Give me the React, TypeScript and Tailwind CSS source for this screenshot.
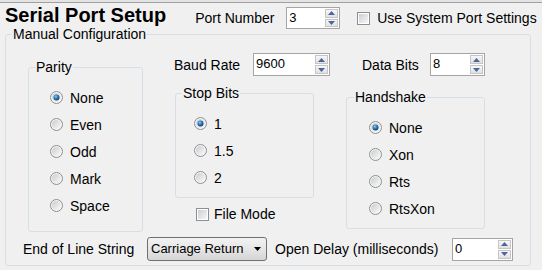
import React from 'react'

function RadioDot({ checked }: { checked?: boolean }) {
  return (
    <svg width="13" height="13" viewBox="0 0 13 13" className="shrink-0">
      <defs>
        <linearGradient id="rb-bg" x1="0" y1="0" x2="1" y2="1">
          <stop offset="0" stopColor="#c9cbcf" />
          <stop offset="1" stopColor="#fbfbfb" />
        </linearGradient>
        <radialGradient id="rb-dot" cx="0.4" cy="0.35" r="0.7">
          <stop offset="0" stopColor="#8fcdf3" />
          <stop offset="0.5" stopColor="#2676b8" />
          <stop offset="1" stopColor="#0b3a6e" />
        </radialGradient>
      </defs>
      <circle cx="6.5" cy="6.5" r="6" fill="#f4f4f4" stroke="#8d8f91" />
      <circle cx="6.5" cy="6.5" r="4.5" fill="url(#rb-bg)" />
      {checked && <circle cx="6.5" cy="6.5" r="3" fill="url(#rb-dot)" />}
    </svg>
  )
}

function CheckBox() {
  return (
    <span className="flex h-[13px] w-[13px] shrink-0 items-center justify-center border border-[#8e8f8f] bg-white">
      <span className="h-[9px] w-[9px] bg-gradient-to-br from-[#cbcfd5] to-[#f6f6f6]" />
    </span>
  )
}

function Radio({ label, checked }: { label: string; checked?: boolean }) {
  return (
    <div className="flex h-[27px] items-center">
      <RadioDot checked={checked} />
      <span className="ml-[7px]">{label}</span>
    </div>
  )
}

function SpinArrow({ up }: { up?: boolean }) {
  return (
    <span className="flex flex-1 items-center justify-center border border-[#c5c5c5] bg-gradient-to-b from-[#f7f7f7] to-[#e1e1e1]">
      <svg width="7" height="4" viewBox="0 0 7 4">
        <path d={up ? 'M0 4 L3.5 0 L7 4 Z' : 'M0 0 L3.5 4 L7 0 Z'} fill="#4c64a0" />
      </svg>
    </span>
  )
}

function Spin({ value, className }: { value: string; className: string }) {
  return (
    <div className={`flex items-stretch border border-[#a5a5a5] bg-white ${className}`}>
      <span className="flex-1 pl-[2px] text-[13px] leading-[19px]">{value}</span>
      <span className="flex w-[15px] flex-col gap-[1px] p-[1px]">
        <SpinArrow up />
        <SpinArrow />
      </span>
    </div>
  )
}

export default function App() {
  return (
    <div className="h-[270px] w-[542px] overflow-hidden bg-[#f0f0f0] font-['Liberation_Sans',Arial,sans-serif] text-[14px] leading-[16px] text-black">
      <div className="h-[2px] bg-[#e3e3e3]" />
      <div className="h-[1px] bg-[#a0a0a0]" />

      <div className="flex h-[23px] items-start">
        <h1 className="ml-[5px] mt-[1px] text-[20px] font-bold leading-[23px]">Serial Port Setup</h1>
        <div className="mt-[4px] flex items-center">
          <span className="ml-[29px] w-[91px]">Port Number</span>
          <Spin value="3" className="h-[22px] w-[54px]" />
          <span className="ml-[17px]">
            <CheckBox />
          </span>
          <span className="ml-[7px]">Use System Port Settings</span>
        </div>
      </div>

      <fieldset className="ml-[5px] h-[240px] w-[526px] rounded-[3px] border border-[#d5dfe5]">
        <legend className="ml-[6px] px-[1px]">Manual Configuration</legend>

        <div className="flex items-start">
          <fieldset className="ml-[22px] mt-[17px] h-[173px] w-[115px] rounded-[3px] border border-[#d5dfe5]">
            <legend className="ml-[6px] px-[1px]">Parity</legend>
            <div className="pl-[21px] pt-[9px]">
              <Radio label="None" checked />
              <Radio label="Even" />
              <Radio label="Odd" />
              <Radio label="Mark" />
              <Radio label="Space" />
            </div>
          </fieldset>

          <div className="ml-[31px] mt-[11px] w-[156px]">
            <div className="flex h-[23px] items-center">
              <span className="w-[79px]">Baud Rate</span>
              <Spin value="9600" className="h-[23px] w-[77px]" />
            </div>
            <fieldset className="ml-[1px] mt-[9px] h-[113px] w-[139px] rounded-[3px] border border-[#d5dfe5]">
              <legend className="ml-[6px] px-[1px]">Stop Bits</legend>
              <div className="pl-[18px] pt-[9px]">
                <Radio label="1" checked />
                <Radio label="1.5" />
                <Radio label="2" />
              </div>
            </fieldset>
            <div className="mt-[8px] flex h-[16px] items-center pl-[22px]">
              <CheckBox />
              <span className="ml-[5px]">File Mode</span>
            </div>
          </div>

          <div className="ml-[16px] mt-[11px]">
            <div className="flex h-[23px] items-center pl-[16px]">
              <span className="w-[68px]">Data Bits</span>
              <Spin value="8" className="h-[23px] w-[55px]" />
            </div>
            <fieldset className="mt-[13px] h-[140px] w-[139px] rounded-[3px] border border-[#d5dfe5]">
              <legend className="ml-[7px] px-[1px]">Handshake</legend>
              <div className="pl-[22px] pt-[9px]">
                <Radio label="None" checked />
                <Radio label="Xon" />
                <Radio label="Rts" />
                <Radio label="RtsXon" />
              </div>
            </fieldset>
          </div>
        </div>

        <div className="mt-[5px] flex h-[24px] items-center">
          <span className="ml-[17px] w-[124px]">End of Line String</span>
          <div className="flex h-[24px] w-[120px] items-center justify-between rounded-[3px] border border-[#707070] bg-gradient-to-b from-[#f2f2f2] via-[#e6e6e6] to-[#d4d4d4] pl-[3px] pr-[5px] text-[13px]">
            <span>Carriage Return</span>
            <svg width="7" height="4" viewBox="0 0 7 4">
              <path d="M0 0 L3.5 4 L7 0 Z" fill="#000" />
            </svg>
          </div>
          <span className="ml-[8px] w-[177px]">Open Delay (milliseconds)</span>
          <Spin value="0" className="h-[23px] w-[61px]" />
        </div>
      </fieldset>
    </div>
  )
}
